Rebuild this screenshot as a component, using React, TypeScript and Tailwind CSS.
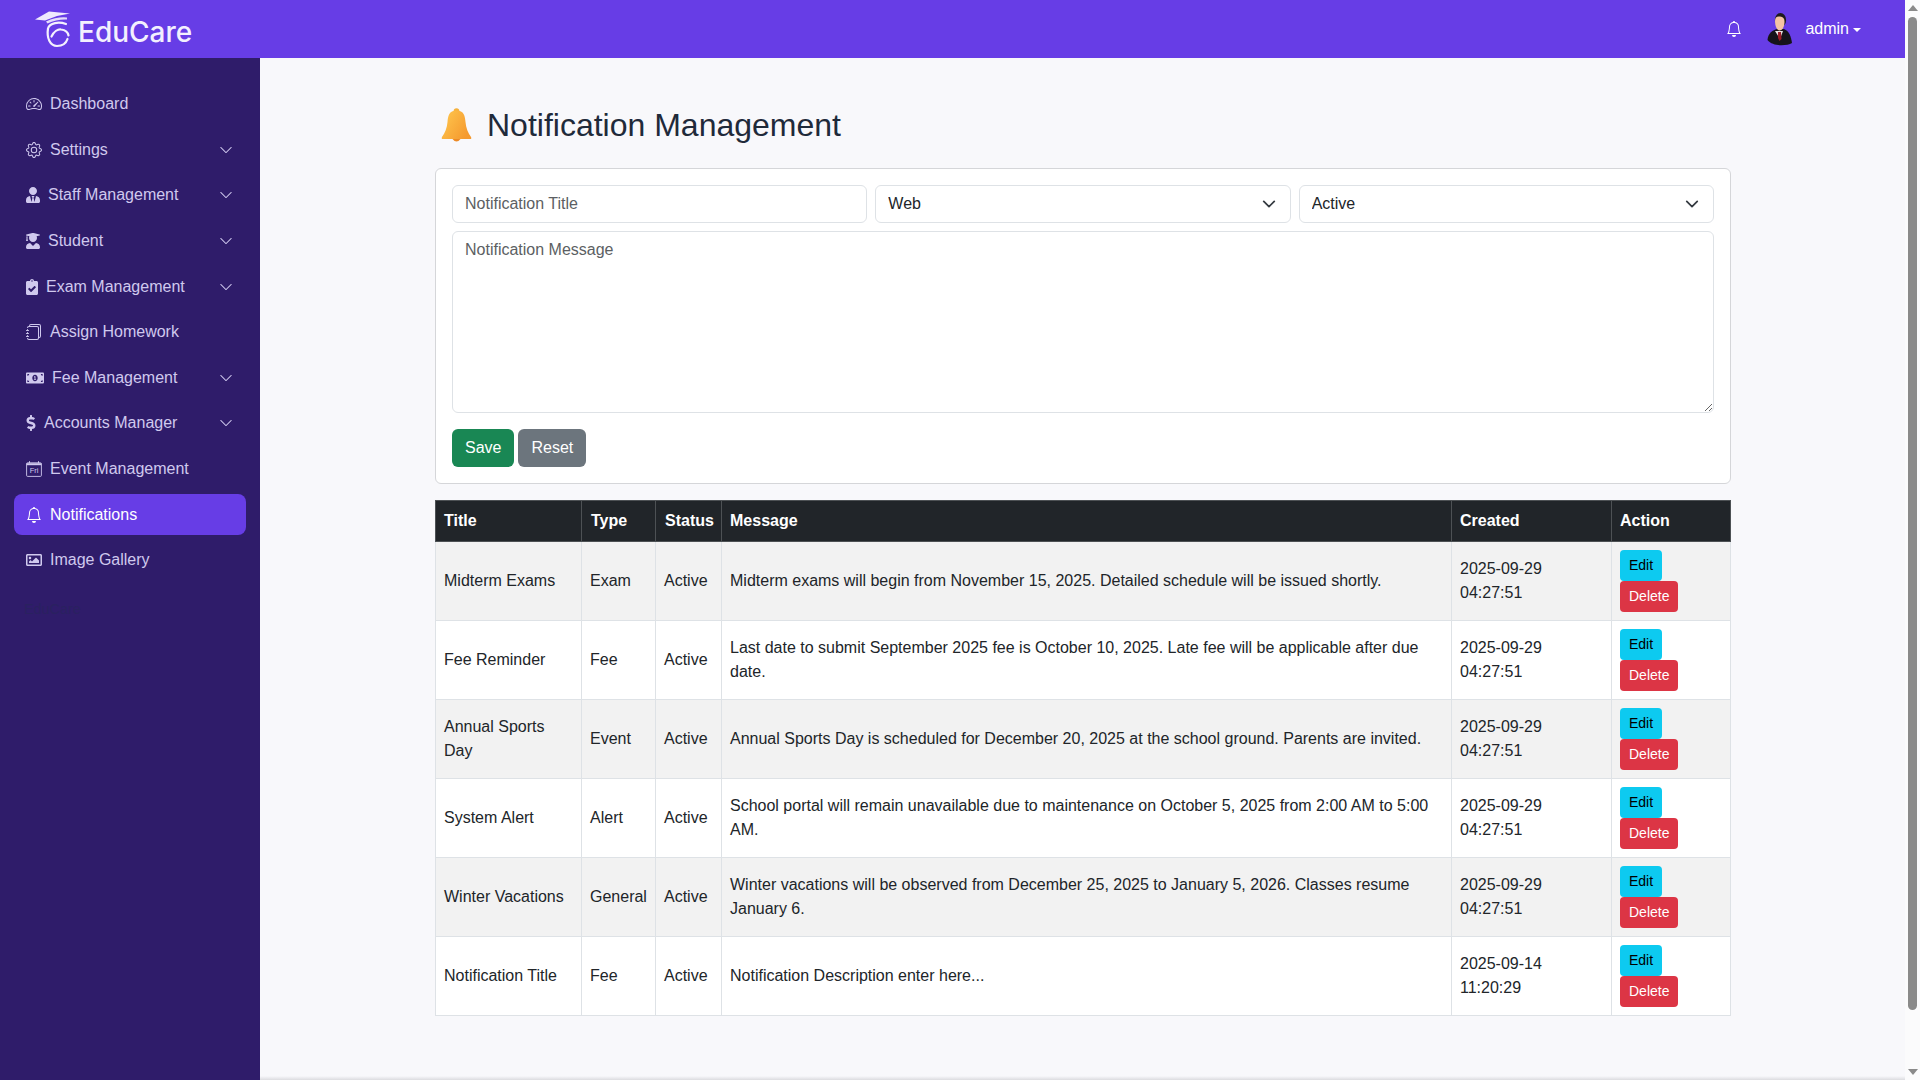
import type { ReactNode } from 'react';
import { BsBell, BsChevronDown, BsGear, BsJournals, BsSpeedometer2 } from 'react-icons/bs';
import {
  FaClipboardCheck,
  FaDollarSign,
  FaMoneyBillAlt,
  FaRegImage,
  FaUserGraduate,
  FaUserTie,
} from 'react-icons/fa';

interface NavItem {
  label: string;
  icon: ReactNode;
  arrow?: boolean;
  active?: boolean;
}

function CalendarIcon() {
  return (
    <svg viewBox="0 0 16 16" className="w-4 h-4 shrink-0" fill="none" stroke="currentColor">
      <rect x="0.6" y="1.8" width="14.8" height="13.6" rx="1" strokeWidth="0.9" />
      <path d="M0.6 3.2h14.8" strokeWidth="2" />
      <path d="M3.5 0.2v2M12.5 0.2v2" strokeWidth="1" />
      <text x="8" y="12.4" textAnchor="middle" fontSize="7.5" fill="currentColor" stroke="none">
        Fri
      </text>
    </svg>
  );
}

const navItems: NavItem[] = [
  { label: 'Dashboard', icon: <BsSpeedometer2 className="w-4 h-4 shrink-0" /> },
  { label: 'Settings', icon: <BsGear className="w-4 h-4 shrink-0" />, arrow: true },
  { label: 'Staff Management', icon: <FaUserTie className="w-[14px] h-4 shrink-0" />, arrow: true },
  { label: 'Student', icon: <FaUserGraduate className="w-[14px] h-4 shrink-0" />, arrow: true },
  { label: 'Exam Management', icon: <FaClipboardCheck className="w-3 h-4 shrink-0" />, arrow: true },
  { label: 'Assign Homework', icon: <BsJournals className="w-4 h-4 shrink-0" /> },
  { label: 'Fee Management', icon: <FaMoneyBillAlt className="w-[18px] h-4 shrink-0" />, arrow: true },
  { label: 'Accounts Manager', icon: <FaDollarSign className="w-[10px] h-4 shrink-0" />, arrow: true },
  { label: 'Event Management', icon: <CalendarIcon /> },
  { label: 'Notifications', icon: <BsBell className="w-4 h-4 shrink-0" />, active: true },
  { label: 'Image Gallery', icon: <FaRegImage className="w-4 h-4 shrink-0" /> },
];

const rows = [
  {
    title: 'Midterm Exams',
    type: 'Exam',
    message: 'Midterm exams will begin from November 15, 2025. Detailed schedule will be issued shortly.',
    date: '2025-09-29',
    time: '04:27:51',
  },
  {
    title: 'Fee Reminder',
    type: 'Fee',
    message: 'Last date to submit September 2025 fee is October 10, 2025. Late fee will be applicable after due date.',
    date: '2025-09-29',
    time: '04:27:51',
  },
  {
    title: 'Annual Sports Day',
    type: 'Event',
    message: 'Annual Sports Day is scheduled for December 20, 2025 at the school ground. Parents are invited.',
    date: '2025-09-29',
    time: '04:27:51',
  },
  {
    title: 'System Alert',
    type: 'Alert',
    message: 'School portal will remain unavailable due to maintenance on October 5, 2025 from 2:00 AM to 5:00 AM.',
    date: '2025-09-29',
    time: '04:27:51',
  },
  {
    title: 'Winter Vacations',
    type: 'General',
    message: 'Winter vacations will be observed from December 25, 2025 to January 5, 2026. Classes resume January 6.',
    date: '2025-09-29',
    time: '04:27:51',
  },
  {
    title: 'Notification Title',
    type: 'Fee',
    message: 'Notification Description enter here...',
    date: '2025-09-14',
    time: '11:20:29',
  },
];

function Logo() {
  return (
    <svg viewBox="0 0 38 38" className="w-[38px] h-[38px] shrink-0" fill="none">
      <path d="M0 8.5 L14 0.5 L35 2.5 L22 5 L10 9.5 Z" fill="#efeafd" />
      <path d="M11 10.5 Q22 5.5 32 6.5 L32 8.5 Q22 8 12.5 12.5 Z" fill="#e4dcfb" />
      <path
        d="M31 13 C24 10.5 14.5 11.5 13 17.5 C11.5 27 15 35 22 35 C27 35 31 32.5 32.5 28"
        stroke="#f4f1fe"
        strokeWidth="2.2"
        strokeLinecap="round"
      />
      <path
        d="M16.5 25.5 C19 20.5 23 18 26 18.5 C30 19 33 21 33.5 24.5"
        stroke="#f4f1fe"
        strokeWidth="2.2"
        strokeLinecap="round"
      />
    </svg>
  );
}

function Avatar() {
  return (
    <svg viewBox="0 0 26 34" className="w-[26px] h-[34px] shrink-0">
      <path d="M0.5 28 C1 21 6 18 10 17 L17 17 C22 19 24 24 25 31 C20 34 6 35 0.5 28 Z" fill="#15131a" />
      <path d="M8 19 L13 27 L16 19 Z" fill="#e8e4e2" />
      <path d="M11 20 L14 20 L14.5 27 L12.5 29 L11 26 Z" fill="#9c1c28" />
      <ellipse cx="13.5" cy="8" rx="5.6" ry="7" fill="#1d1a1c" />
      <path d="M8 9 C8 5 10 4 13 4.5 C16 5 17.5 6 17.5 10 C17.5 15 15 18.5 12.5 18.5 C10 18.5 8 14 8 9 Z" fill="#f5c3a4" />
    </svg>
  );
}

function TitleBell() {
  return (
    <svg viewBox="0 0 32 34" className="w-8 h-[34px] shrink-0">
      <defs>
        <linearGradient id="bellFill" x1="0" y1="0" x2="1" y2="0.6">
          <stop offset="0" stopColor="#ffc94f" />
          <stop offset="1" stopColor="#f59a2f" />
        </linearGradient>
      </defs>
      <circle cx="15.5" cy="3" r="2.8" fill="#f6b13c" />
      <path d="M15.5 2.5 C8 2.5 7 8 6.5 14 C6 20 4 25 1 29 Q0 31 2 31 L29 31 Q31 31 30 29 C27 25 25 20 24.5 14 C24 8 23 2.5 15.5 2.5 Z" fill="url(#bellFill)" />
      <path d="M11.5 31 Q15.5 36 19.5 31 Z" fill="#ec8a26" />
    </svg>
  );
}

function Chevron() {
  return (
    <svg
      viewBox="0 0 16 16"
      className="absolute right-[15px] top-[12px] w-[14px] h-[14px] pointer-events-none"
      fill="none"
      stroke="#343a40"
      strokeWidth="2"
      strokeLinecap="round"
      strokeLinejoin="round"
    >
      <path d="m2 5 6 6 6-6" />
    </svg>
  );
}

function SelectBox({ value, options }: { value: string; options: string[] }) {
  return (
    <div className="relative">
      <select
        defaultValue={value}
        className="w-full h-[38px] appearance-none bg-white border border-[#dee2e6] rounded-md pl-3 pr-9 text-base text-[#212529]"
      >
        {options.map(option => (
          <option key={option}>{option}</option>
        ))}
      </select>
      <Chevron />
    </div>
  );
}

export default function App() {
  return (
    <div className="flex w-screen h-screen overflow-hidden bg-[#f8f8fb] font-['Liberation_Sans',Arial,sans-serif] text-base text-[#212529]">
      <div className="flex flex-col flex-1 min-w-0">
        {/* Top bar */}
        <header className="flex items-center h-[58px] shrink-0 bg-[#673de6] text-white">
          <div className="flex items-center pl-[35px] pt-[1px]">
            <Logo />
            <span className="ml-[5px] mt-[4px] text-[28px] leading-none font-medium font-['Inter',sans-serif] text-[#f3f0fe]">
              EduCare
            </span>
          </div>
          <div className="flex items-center ml-auto pr-[44px]">
            <BsBell className="w-4 h-4 shrink-0" />
            <div className="ml-[26px] -translate-x-px">
              <Avatar />
            </div>
            <span className="ml-[11px] text-base">admin</span>
            <span className="ml-1 mt-[2px] w-0 h-0 border-x-[4px] border-x-transparent border-t-[4px] border-t-white" />
          </div>
        </header>

        <div className="flex flex-1 min-h-0">
          {/* Sidebar */}
          <aside className="w-[260px] shrink-0 bg-[#2f1c6a] pt-[25.5px] px-[14px]">
            <nav className="flex flex-col gap-1">
              {navItems.map(item => (
                <div
                  key={item.label}
                  className={`flex items-center gap-2 h-[41.6px] pl-3 pr-[13px] rounded-lg ${
                    item.active ? 'bg-[#673de6] text-white' : 'text-[#d0c9ee]'
                  }`}
                >
                  {item.icon}
                  <span>{item.label}</span>
                  {item.arrow && <BsChevronDown className="ml-auto w-[14px] h-[14px]" />}
                </div>
              ))}
            </nav>
            <p className="mt-[18px] ml-[10px] text-[14.4px] text-[#2a2160]">EduCare</p>
          </aside>

          {/* Content */}
          <main className="flex flex-col flex-1 min-w-0 pt-[48px]">
            <div className="flex-1 w-[1296px] ml-[175px]">
              <h1 className="flex items-center mb-[24px] pl-[6px] text-[32px] leading-[38.4px] text-[#1f2a3a]">
                <TitleBell />
                <span className="ml-[14px]">Notification Management</span>
              </h1>

              <form className="mb-[16px] p-4 bg-white border border-[#d5d6d9] rounded-md">
                <div className="grid grid-cols-3 gap-2">
                  <input
                    placeholder="Notification Title"
                    className="w-full h-[38px] px-3 bg-white border border-[#dee2e6] rounded-md placeholder:text-[#5c5f63]"
                  />
                  <SelectBox value="Web" options={['Web', 'Exam', 'Fee', 'Event', 'Alert', 'General']} />
                  <SelectBox value="Active" options={['Active', 'Inactive']} />
                </div>
                <textarea
                  placeholder="Notification Message"
                  className="block w-full h-[182px] mt-2 px-3 py-[6px] bg-white border border-[#dee2e6] rounded-md placeholder:text-[#5c5f63]"
                />
                <div className="flex gap-1 mt-4">
                  <button type="button" className="h-[38px] px-[13px] rounded-md bg-[#198754] text-white">
                    Save
                  </button>
                  <button type="button" className="h-[38px] px-[13px] rounded-md bg-[#6c757d] text-white">
                    Reset
                  </button>
                </div>
              </form>

              <table className="w-[1295px] table-fixed border-collapse">
                <thead>
                  <tr className="bg-[#212529] text-white text-left">
                    <th className="w-[146px] h-[41px] px-2 border border-[#4d5154]">Title</th>
                    <th className="w-[74px] pl-[9px] pr-2 border border-[#4d5154]">Type</th>
                    <th className="w-[66px] pl-[9px] pr-1 border border-[#4d5154]">Status</th>
                    <th className="w-[730px] px-2 border border-[#4d5154]">Message</th>
                    <th className="w-[160px] px-2 border border-[#4d5154]">Created</th>
                    <th className="w-[119px] px-2 border border-[#4d5154]">Action</th>
                  </tr>
                </thead>
                <tbody>
                  {rows.map((row, index) => (
                    <tr key={row.title} className={index % 2 === 0 ? 'bg-[#f2f2f2]' : 'bg-white'}>
                      <td className="px-2 py-2 border border-[#dee2e6]">{row.title}</td>
                      <td className="px-2 py-2 border border-[#dee2e6]">{row.type}</td>
                      <td className="px-2 py-2 border border-[#dee2e6]">Active</td>
                      <td className="px-2 py-2 border border-[#dee2e6]">{row.message}</td>
                      <td className="px-2 py-2 border border-[#dee2e6]">
                        {row.date}
                        <br />
                        {row.time}
                      </td>
                      <td className="px-2 py-2 border border-[#dee2e6]">
                        <div className="flex flex-col items-start">
                          <button type="button" className="h-[31px] px-[9px] pb-[2px] rounded-[4px] bg-[#0dcaf0] text-sm text-black">
                            Edit
                          </button>
                          <button type="button" className="h-[31px] px-[9px] pb-[2px] rounded-[4px] bg-[#dc3545] text-sm text-white">
                            Delete
                          </button>
                        </div>
                      </td>
                    </tr>
                  ))}
                </tbody>
              </table>
            </div>
            <div className="h-[4px] shrink-0 bg-gradient-to-b from-[#f8f8fb] to-[#dcdce0]" />
          </main>
        </div>
      </div>

      {/* Page scrollbar */}
      <div className="flex flex-col items-center w-[15px] shrink-0 bg-[#fbfbfc]">
        <div className="mt-[5px] w-0 h-0 border-x-[5px] border-x-transparent border-b-[6px] border-b-[#8a8a8a]" />
        <div className="mt-[6px] w-[9px] h-[993px] rounded-full bg-[#8a8a8a]" />
        <div className="mt-auto mb-[5px] w-0 h-0 border-x-[5px] border-x-transparent border-t-[6px] border-t-[#8a8a8a]" />
      </div>
    </div>
  );
}
